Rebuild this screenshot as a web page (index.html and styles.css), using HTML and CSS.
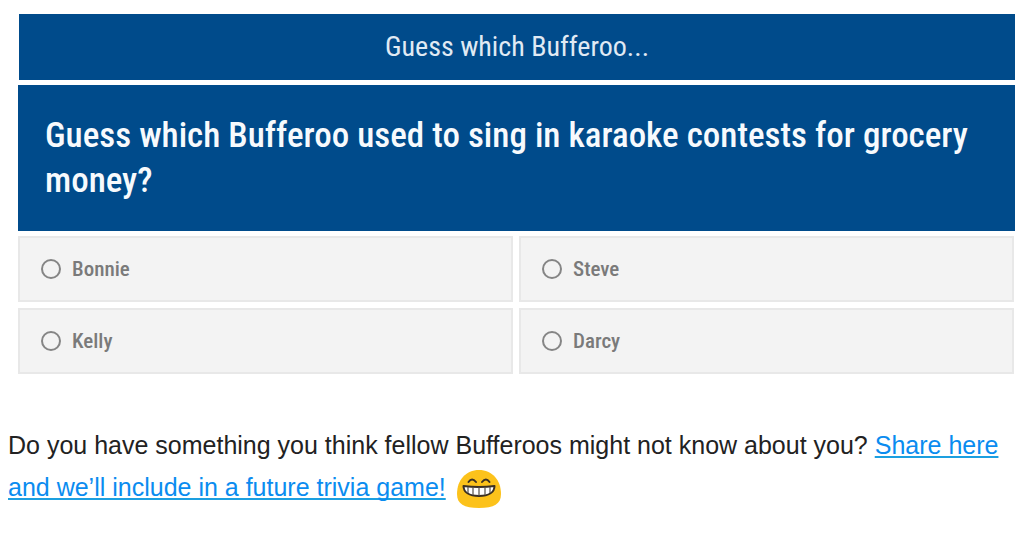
FILE: index.html
```
<!DOCTYPE html>
<html lang="en">
<head>
<meta charset="utf-8">
<title>Guess which Bufferoo</title>
<link rel="stylesheet" href="styles.css">
</head>
<body>
<main class="page">
  <form class="quiz">
    <h1 class="quiz-title">Guess which Bufferoo...</h1>
    <fieldset class="quiz-body">
      <legend class="question">Guess which Bufferoo used to sing in karaoke contests for grocery money?</legend>
      <div class="options">
        <label class="option"><input class="radio" type="radio" name="answer" value="bonnie">Bonnie</label>
        <label class="option"><input class="radio" type="radio" name="answer" value="steve">Steve</label>
        <label class="option"><input class="radio" type="radio" name="answer" value="kelly">Kelly</label>
        <label class="option"><input class="radio" type="radio" name="answer" value="darcy">Darcy</label>
      </div>
    </fieldset>
  </form>
  <p class="note">Do you have something you think fellow Bufferoos might not know about you? <a class="link" href="#share">Share here and we’ll include in a future trivia game!</a>
    <svg class="emoji" viewBox="0 0 44 38" role="img" aria-label="Grinning face">
      <path d="M22 0C35 0 44 10 44 24C44 34 37 38 22 38S0 34 0 24C0 10 9 0 22 0Z" fill="#fcc21b"/>
      <path d="M11.500 12Q15 7 19 12M25 12Q29 7 32.500 12" fill="none" stroke="#3b3024" stroke-width="2" stroke-linecap="round"/>
      <path d="M6.500 16Q22 18 37.500 16C37.500 22 32 26 22 26S6.500 22 6.500 16Z" fill="#fff" stroke="#3b3024" stroke-width="2" stroke-linejoin="round"/>
      <path d="M11 17V23M16 17V25M22 17V26M28 17V25M33 17V23" stroke="#55504a" stroke-width="1.200"/>
    </svg>
  </p>
</main>
</body>
</html>
```
FILE: styles.css
```
* {
  box-sizing: border-box;
}

body {
  margin: 0;
  background: #fff;
}

.page {
  padding: 14px 8px 24px;
}

.quiz {
  margin: 0 13px 0 10px;
  font-family: "Roboto Condensed", Roboto, sans-serif;
}

.quiz-title {
  margin: 0 0 5px 1px;
  padding: 17px 24px;
  background: #004b8b;
  color: #e0eaf4;
  font-size: 28px;
  font-weight: 400;
  line-height: 32px;
  text-align: center;
}

.quiz-body {
  min-width: 0;
  margin: 0;
  padding: 0;
  border: 0;
}

.question {
  width: 100%;
  margin-bottom: 5px;
  padding: 28px 27px;
  background: #004b8b;
  color: #f7fafd;
  font-size: 35px;
  font-weight: 500;
  line-height: 45px;
}

.options {
  display: grid;
  grid-template-columns: 1fr 1fr;
  gap: 6px;
  margin-right: 1px;
}

.option {
  display: flex;
  align-items: center;
  gap: 11px;
  padding: 18px 21px;
  border: 2px solid #e8e8e8;
  background: #f3f3f3;
  color: #7a7a7a;
  font-size: 21px;
  font-weight: 500;
  line-height: 26px;
}

.radio {
  appearance: none;
  flex: none;
  width: 20px;
  height: 20px;
  margin: 0;
  border: 2px solid #858585;
  border-radius: 50%;
}

.radio:checked {
  background: #858585;
  box-shadow: inset 0 0 0 3px #f3f3f3;
}

.note {
  margin: 50px 0 0;
  color: #222;
  font-family: "Liberation Sans", Arial, sans-serif;
  font-size: 25px;
  line-height: 42px;
}

.link {
  color: #0a8cf0;
  text-decoration: underline;
  text-decoration-color: #1c9fe0;
  text-decoration-thickness: 2px;
  text-underline-offset: 2px;
  text-decoration-skip-ink: none;
}

.emoji {
  width: 44px;
  height: 38px;
  margin-left: 4px;
  vertical-align: middle;
}
```
